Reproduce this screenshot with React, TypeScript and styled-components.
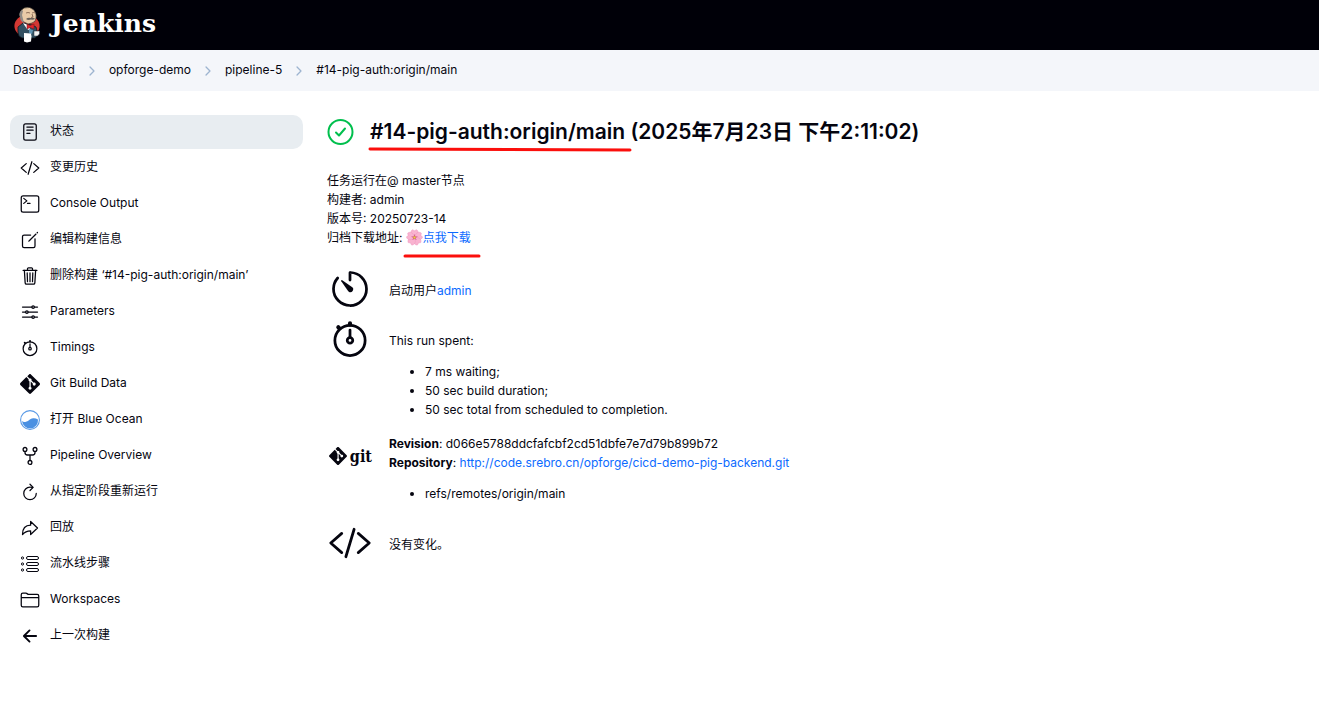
import React from "react";
import styled, { createGlobalStyle } from "styled-components";
import {
  IoArrowBackOutline,
  IoArrowRedoOutline,
  IoChevronForwardOutline,
  IoCodeSlashOutline,
  IoCreateOutline,
  IoFolderOutline,
  IoOptionsOutline,
  IoReaderOutline,
  IoRefreshOutline,
  IoStopwatchOutline,
  IoTerminalOutline,
  IoTimerOutline,
  IoTrashOutline,
} from "react-icons/io5";
import { SiGit } from "react-icons/si";

const ink = "#05050f";
const blue = "#0b6aff";

const GlobalStyle = createGlobalStyle`
  *, *::before, *::after { box-sizing: border-box; }
  body {
    margin: 0;
    background: #fff;
    color: ${ink};
    font-family: Inter, "Noto Sans CJK SC", sans-serif;
    font-size: 12px;
    line-height: 19px;
  }
`;

const Header = styled.header`
  display: flex;
  align-items: center;
  height: 50px;
  padding: 0 14px;
  background: #000008;
`;

const Brand = styled.a`
  display: flex;
  align-items: center;
  gap: 10px;
  color: #fff;
  text-decoration: none;
`;

const Wordmark = styled.span`
  padding-bottom: 2px;
  font-family: "DejaVu Serif", serif;
  font-weight: 700;
  font-size: 25px;
  line-height: 32px;
`;

const Breadcrumbs = styled.nav`
  min-height: 41px;
  padding: 10px 13px;
  background: #f4f6fa;
`;

const Crumbs = styled.ol`
  display: flex;
  flex-wrap: wrap;
  margin: 0;
  padding: 0;
  list-style: none;
`;

const Crumb = styled.li`
  display: flex;
  align-items: center;
  a { color: inherit; text-decoration: none; }
  svg { margin: 2px 10px 0; color: #9db4d0; }
`;

const Page = styled.div`
  display: grid;
  grid-template-columns: 293px minmax(0, 1fr);
  gap: 24px;
  padding: 24px 10px;
`;

const Tasks = styled.nav`
  display: flex;
  flex-direction: column;
  gap: 2px;
`;

const Task = styled.a<{ $active?: boolean }>`
  display: flex;
  align-items: center;
  gap: 10px;
  height: 34px;
  padding: 0 10px;
  border-radius: 10px;
  background: ${(p) => (p.$active ? "#e8edf1" : "transparent")};
  color: inherit;
  text-decoration: none;
  svg { flex: none; }
`;

const TaskLabel = styled.span`
  padding-bottom: 4px;
`;

const Title = styled.h1`
  display: flex;
  align-items: center;
  gap: 16px;
  margin: 0;
  font-size: 21px;
  line-height: 34px;
  font-weight: 600;
  > svg { flex: none; }
`;

const Marked = styled.span`
  position: relative;
`;

const Underline = styled.svg<{ $left: number; $top: number; $width: number }>`
  position: absolute;
  left: ${(p) => p.$left}px;
  top: ${(p) => p.$top}px;
  width: ${(p) => p.$width}px;
  height: 6px;
  pointer-events: none;
`;

const Description = styled.div`
  margin: 22px 0 20px;
`;

const Link = styled.a`
  color: ${blue};
  text-decoration: none;
`;

const Flower = styled.svg`
  width: 17px;
  height: 17px;
  vertical-align: -4px;
`;

const Summary = styled.section<{ $inset?: boolean; $after: number }>`
  display: grid;
  grid-template-columns: 45px minmax(0, 1fr);
  gap: 17px;
  margin-bottom: ${(p) => p.$after}px;
  > svg { justify-self: end; }
  > div { padding-top: ${(p) => (p.$inset ? 14 : 0)}px; }
`;

const Bullets = styled.ul`
  margin: 12px 0 0;
  padding-left: 36px;
`;

const GitBadge = styled.span`
  display: flex;
  align-items: center;
  justify-content: flex-end;
  gap: 3px;
  height: 44px;
  font-family: "DejaVu Serif Condensed", "DejaVu Serif", serif;
  font-weight: 700;
  font-size: 16px;
  svg { flex: none; }
`;

function Butler() {
  return (
    <svg width="27" height="36" viewBox="0 0 27 36" aria-hidden="true">
      <ellipse cx="13" cy="19" rx="12.6" ry="11" fill="#d33833" />
      <path d="M4 20l5-4 9 2 4 2 2 8-3 3H8l-3-2-1-4z" fill="#335061" stroke="#101820" strokeWidth="0.8" />
      <path d="M6 9Q5 4 10 1q6-2 10 2 3 4 2 8 0 4-4 5l-4 1-4-2q-3-2-4-6z" fill="#e9cba8" stroke="#292522" strokeWidth="0.6" />
      <path d="M6 10Q4 6 8 3l1 1-1 4 1 4 1 4Q6 14 6 10z" fill="#8f8b86" />
      <path d="M12 6q2-1 4 0m2 0q2-1 3 0M18 7l1 3-2 .5" fill="none" stroke="#7a5a48" strokeWidth="0.8" />
      <path d="M12 12q2-2 5-1 3-1 4 1-2 1-4 .5-3 1-5-.5z" fill="#6b625c" />
      <path d="M9 16l5 2 3 6-4-2z" fill="#fff" />
      <path d="M13 17l3 1.500L20 17v5l-4-1.500L13 22z" fill="#e0262c" stroke="#701217" strokeWidth="0.5" />
      <path d="M15 22l4 1-1 4-3-1z" fill="#5f93b3" />
      <path d="M10 26l7 .5.5 3-.5 5-4 1-3-1z" fill="#fff" />
      <path d="M20 24h5.500v3l-2 2H20z" fill="#f4f4f4" stroke="#283845" strokeWidth="0.5" />
    </svg>
  );
}

function Success() {
  return (
    <svg
      width="27"
      height="27"
      viewBox="0 0 27 27"
      fill="none"
      stroke="#00bf4d"
      strokeWidth="2"
      strokeLinecap="round"
      strokeLinejoin="round"
      aria-label="Success"
    >
      <circle cx="13.5" cy="13" r="12" />
      <path d="M9 13.500l3 3 6-7" />
    </svg>
  );
}

function Steps() {
  return (
    <svg width="20" height="20" viewBox="0 0 20 20" fill="none" stroke="currentColor" aria-hidden="true">
      {[4, 10, 16].map((y) => (
        <g key={y}>
          <circle cx="2.500" cy={y} r="1.1" />
          <rect x="6.500" y={y - 1.5} width="12" height="3" rx="1.5" />
        </g>
      ))}
    </svg>
  );
}

function Fork() {
  return (
    <svg width="20" height="20" viewBox="0 0 20 20" fill="none" stroke="currentColor" strokeWidth="1.3" aria-hidden="true">
      <circle cx="5" cy="3.400" r="1.900" />
      <circle cx="15" cy="3.400" r="1.900" />
      <circle cx="10" cy="16.400" r="1.900" />
      <path d="M5 5.300v1.200Q5 9 7.500 9h5Q15 9 15 6.500V5.300M10 9v5.500" />
    </svg>
  );
}

function Ocean() {
  return (
    <svg width="20" height="20" viewBox="0 0 20 20" aria-hidden="true">
      <circle cx="10" cy="10" r="9.400" fill="#fff" stroke="#5a9ae6" strokeWidth="1.100" />
      <path d="M2 11q1.500 1.500 4 .8c3-.8 4-3.300 7-3.500q2.500-.3 5 1.200A8 8 0 0 1 2 11z" fill="#4a90e2" />
    </svg>
  );
}

function Blossom() {
  const turns = [0, 72, 144, 216, 288];
  return (
    <Flower viewBox="0 0 20 20" role="img" aria-label="🌸">
      {turns.map((turn) => (
        <path
          key={turn}
          transform={`rotate(${turn} 10 10)`}
          d="M10 10C5 7 4.500 3 7.500 .8L10 2 12.500 .8c3 2.200 2.500 6.200-2.500 9.200z"
          fill="#f9b3d0"
          stroke="#ee90bb"
          strokeWidth="0.5"
        />
      ))}
      {turns.map((turn) => (
        <path key={turn} transform={`rotate(${turn} 10 10)`} d="M10 10V6.500" stroke="#c9447f" strokeWidth="0.8" />
      ))}
      <circle cx="10" cy="10" r="1.500" fill="#f0d23c" stroke="#b0503c" strokeWidth="0.4" />
    </Flower>
  );
}

const crumbs = ["Dashboard", "opforge-demo", "pipeline-5", "#14-pig-auth:origin/main"];

const tasks: { label: string; icon: React.ReactNode }[] = [
  { label: "状态", icon: <IoReaderOutline size={20} /> },
  { label: "变更历史", icon: <IoCodeSlashOutline size={20} /> },
  { label: "Console Output", icon: <IoTerminalOutline size={20} /> },
  { label: "编辑构建信息", icon: <IoCreateOutline size={20} /> },
  { label: "删除构建 ‘#14-pig-auth:origin/main’", icon: <IoTrashOutline size={20} /> },
  { label: "Parameters", icon: <IoOptionsOutline size={20} /> },
  { label: "Timings", icon: <IoStopwatchOutline size={20} /> },
  { label: "Git Build Data", icon: <SiGit size={20} /> },
  { label: "打开 Blue Ocean", icon: <Ocean /> },
  { label: "Pipeline Overview", icon: <Fork /> },
  { label: "从指定阶段重新运行", icon: <IoRefreshOutline size={20} /> },
  { label: "回放", icon: <IoArrowRedoOutline size={20} /> },
  { label: "流水线步骤", icon: <Steps /> },
  { label: "Workspaces", icon: <IoFolderOutline size={20} /> },
  { label: "上一次构建", icon: <IoArrowBackOutline size={20} /> },
];

export default function App() {
  return (
    <>
      <GlobalStyle />
      <Header>
        <Brand href="#">
          <Butler />
          <Wordmark>Jenkins</Wordmark>
        </Brand>
      </Header>
      <Breadcrumbs aria-label="Breadcrumb">
        <Crumbs>
          {crumbs.map((name, i) => (
            <Crumb key={name}>
              <a href="#">{name}</a>
              {i < crumbs.length - 1 && <IoChevronForwardOutline size={14} />}
            </Crumb>
          ))}
        </Crumbs>
      </Breadcrumbs>
      <Page>
        <Tasks aria-label="Tasks">
          {tasks.map((task, i) => (
            <Task key={task.label} href="#" $active={i === 0}>
              {task.icon}
              <TaskLabel>{task.label}</TaskLabel>
            </Task>
          ))}
        </Tasks>
        <main>
          <Title>
            <Success />
            <Marked>
              #14-pig-auth:origin/main (2025年7月23日 下午2:11:02)
              <Underline $left={-2} $top={32} $width={264} viewBox="0 0 264 6">
                <path d="M2 2L262 3" stroke="#fb0f0c" strokeWidth="3" strokeLinecap="round" />
              </Underline>
            </Marked>
          </Title>
          <Description>
            <div>任务运行在@ master节点</div>
            <div>构建者: admin</div>
            <div>版本号: 20250723-14</div>
            <div>
              归档下载地址:{" "}
              <Marked>
                <Link href="#">
                  <Blossom />
                  点我下载
                </Link>
                <Underline $left={-3} $top={23} $width={78} viewBox="0 0 78 6">
                  <path d="M2 3H76" stroke="#fb0f0c" strokeWidth="3" strokeLinecap="round" />
                </Underline>
              </Marked>
            </div>
          </Description>
          <Summary $inset $after={6}>
            <IoTimerOutline size={44} />
            <div>
              启动用户<Link href="#">admin</Link>
            </div>
          </Summary>
          <Summary $inset $after={15}>
            <IoStopwatchOutline size={44} />
            <div>
              This run spent:
              <Bullets>
                <li>7 ms waiting;</li>
                <li>50 sec build duration;</li>
                <li>50 sec total from scheduled to completion.</li>
              </Bullets>
            </div>
          </Summary>
          <Summary $after={18}>
            <GitBadge>
              <SiGit size={18} />
              git
            </GitBadge>
            <div>
              <b>Revision</b>: d066e5788ddcfafcbf2cd51dbfe7e7d79b899b72
              <br />
              <b>Repository</b>: <Link href="#">http://code.srebro.cn/opforge/cicd-demo-pig-backend.git</Link>
              <Bullets>
                <li>refs/remotes/origin/main</li>
              </Bullets>
            </div>
          </Summary>
          <Summary $inset $after={0}>
            <IoCodeSlashOutline size={44} />
            <div>没有变化。</div>
          </Summary>
        </main>
      </Page>
    </>
  );
}
